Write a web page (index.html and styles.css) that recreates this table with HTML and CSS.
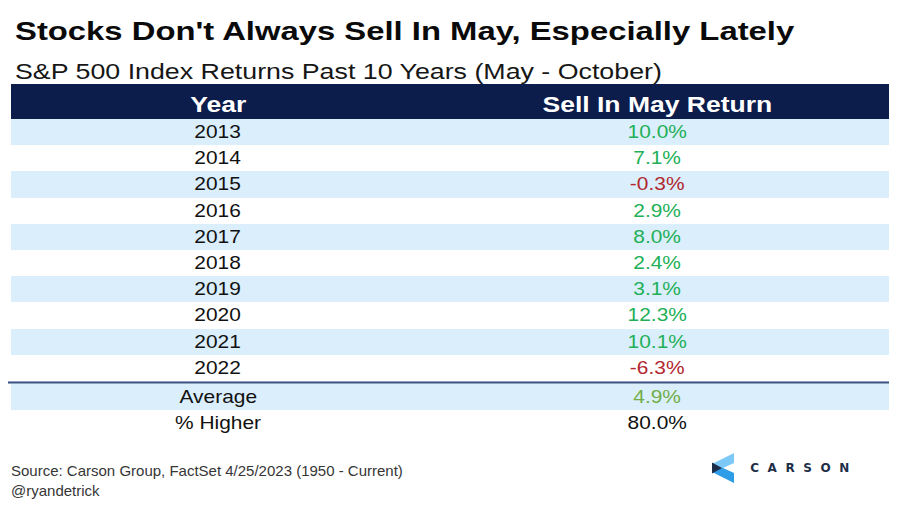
FILE: index.html
```html
<!DOCTYPE html>
<html lang="en">
<head>
<meta charset="utf-8">
<title>Stocks Don't Always Sell In May</title>
<link rel="stylesheet" href="styles.css">
</head>
<body>
<div class="page">
  <h1 class="title"><span>Stocks Don't Always Sell In May, Especially Lately</span></h1>
  <p class="subtitle"><span>S&amp;P 500 Index Returns Past 10 Years (May - October)</span></p>

  <div class="table">
    <div class="row head"><div class="cell"><span>Year</span></div><div class="cell"><span>Sell In May Return</span></div></div>
    <div class="row alt"><div class="cell"><span>2013</span></div><div class="cell pos"><span>10.0%</span></div></div>
    <div class="row"><div class="cell"><span>2014</span></div><div class="cell pos"><span>7.1%</span></div></div>
    <div class="row alt"><div class="cell"><span>2015</span></div><div class="cell neg"><span>-0.3%</span></div></div>
    <div class="row"><div class="cell"><span>2016</span></div><div class="cell pos"><span>2.9%</span></div></div>
    <div class="row alt"><div class="cell"><span>2017</span></div><div class="cell pos"><span>8.0%</span></div></div>
    <div class="row"><div class="cell"><span>2018</span></div><div class="cell pos"><span>2.4%</span></div></div>
    <div class="row alt"><div class="cell"><span>2019</span></div><div class="cell pos"><span>3.1%</span></div></div>
    <div class="row"><div class="cell"><span>2020</span></div><div class="cell pos"><span>12.3%</span></div></div>
    <div class="row alt"><div class="cell"><span>2021</span></div><div class="cell pos"><span>10.1%</span></div></div>
    <div class="row"><div class="cell"><span>2022</span></div><div class="cell neg"><span>-6.3%</span></div></div>
    <div class="sep"></div>
    <div class="row alt"><div class="cell"><span>Average</span></div><div class="cell avg"><span>4.9%</span></div></div>
    <div class="row"><div class="cell"><span>% Higher</span></div><div class="cell"><span>80.0%</span></div></div>
  </div>

  <footer class="footer">
    <div class="notes">
      <div>Source: Carson Group, FactSet 4/25/2023 (1950 - Current)</div>
      <div>@ryandetrick</div>
    </div>
    <div class="logo">
      <svg class="mark" width="22" height="30" viewBox="0 0 22 30" aria-hidden="true">
        <polygon points="22,0 22,10 11,15 0,15 0,11" fill="#7cc9f8"/>
        <polygon points="0,15 11,15 22,20 22,30 0,19" fill="#2d9de7"/>
        <polygon points="0,9.5 10,15 0,20.5" fill="#1b2d4a"/>
      </svg>
      <span class="brand">CARSON</span>
    </div>
  </footer>
</div>
</body>
</html>
```

FILE: styles.css
```css
* { box-sizing: border-box; }

html, body {
  margin: 0;
  padding: 0;
  background: #ffffff;
}

body {
  font-family: "Liberation Sans", Arial, sans-serif;
  color: #111111;
}

.page {
  width: 905px;
  height: 505px;
  overflow: hidden;
}

.title {
  margin: 0;
  padding: 16px 0 0 15px;
  font-size: 26px;
  line-height: 30px;
  font-weight: 700;
  color: #0a0a0a;
  white-space: nowrap;
}

.title span {
  display: inline-block;
  transform: scaleX(1.262);
  transform-origin: left center;
}

.subtitle {
  margin: 14px 0 0 0;
  padding-left: 15px;
  font-size: 22px;
  line-height: 24px;
  color: #161616;
  white-space: nowrap;
}

.subtitle span {
  display: inline-block;
  transform: scaleX(1.217);
  transform-origin: left center;
}

.table {
  margin-left: 11px;
  width: 878px;
}

.row {
  display: grid;
  grid-template-columns: 414px 1fr;
  height: 26.2px;
  font-size: 18.5px;
  line-height: 26.2px;
}

.row.alt { background: #daeefb; }

.cell {
  text-align: center;
  white-space: nowrap;
}

.cell span {
  display: inline-block;
  transform: scaleX(1.13);
  transform-origin: center center;
}

.row.head {
  height: 35px;
  background: #0c1c4b;
  color: #ffffff;
  font-weight: 700;
  font-size: 22px;
  line-height: 29px;
  padding-top: 6px;
}

.row.head .cell span { transform: scaleX(1.205); }

.pos { color: #22b057; }
.neg { color: #b3262e; }
.avg { color: #72ae48; }

.sep {
  height: 3px;
  margin-left: -3px;
  border-top: 1px solid #8ea1bf;
  border-bottom: 1px solid #8ea1bf;
  background: #3f5481;
}

.footer {
  display: flex;
  justify-content: space-between;
  align-items: flex-start;
  margin-top: 25px;
  padding: 0 47px 0 11px;
}

.notes {
  font-size: 15px;
  line-height: 20px;
  color: #363636;
}

.logo {
  display: flex;
  align-items: center;
  gap: 16px;
  margin-top: -8px;
}

.mark { display: block; }

.brand {
  font-family: "DejaVu Sans", sans-serif;
  font-weight: 700;
  font-size: 12px;
  letter-spacing: 8.6px;
  color: #1e2f48;
}
```
